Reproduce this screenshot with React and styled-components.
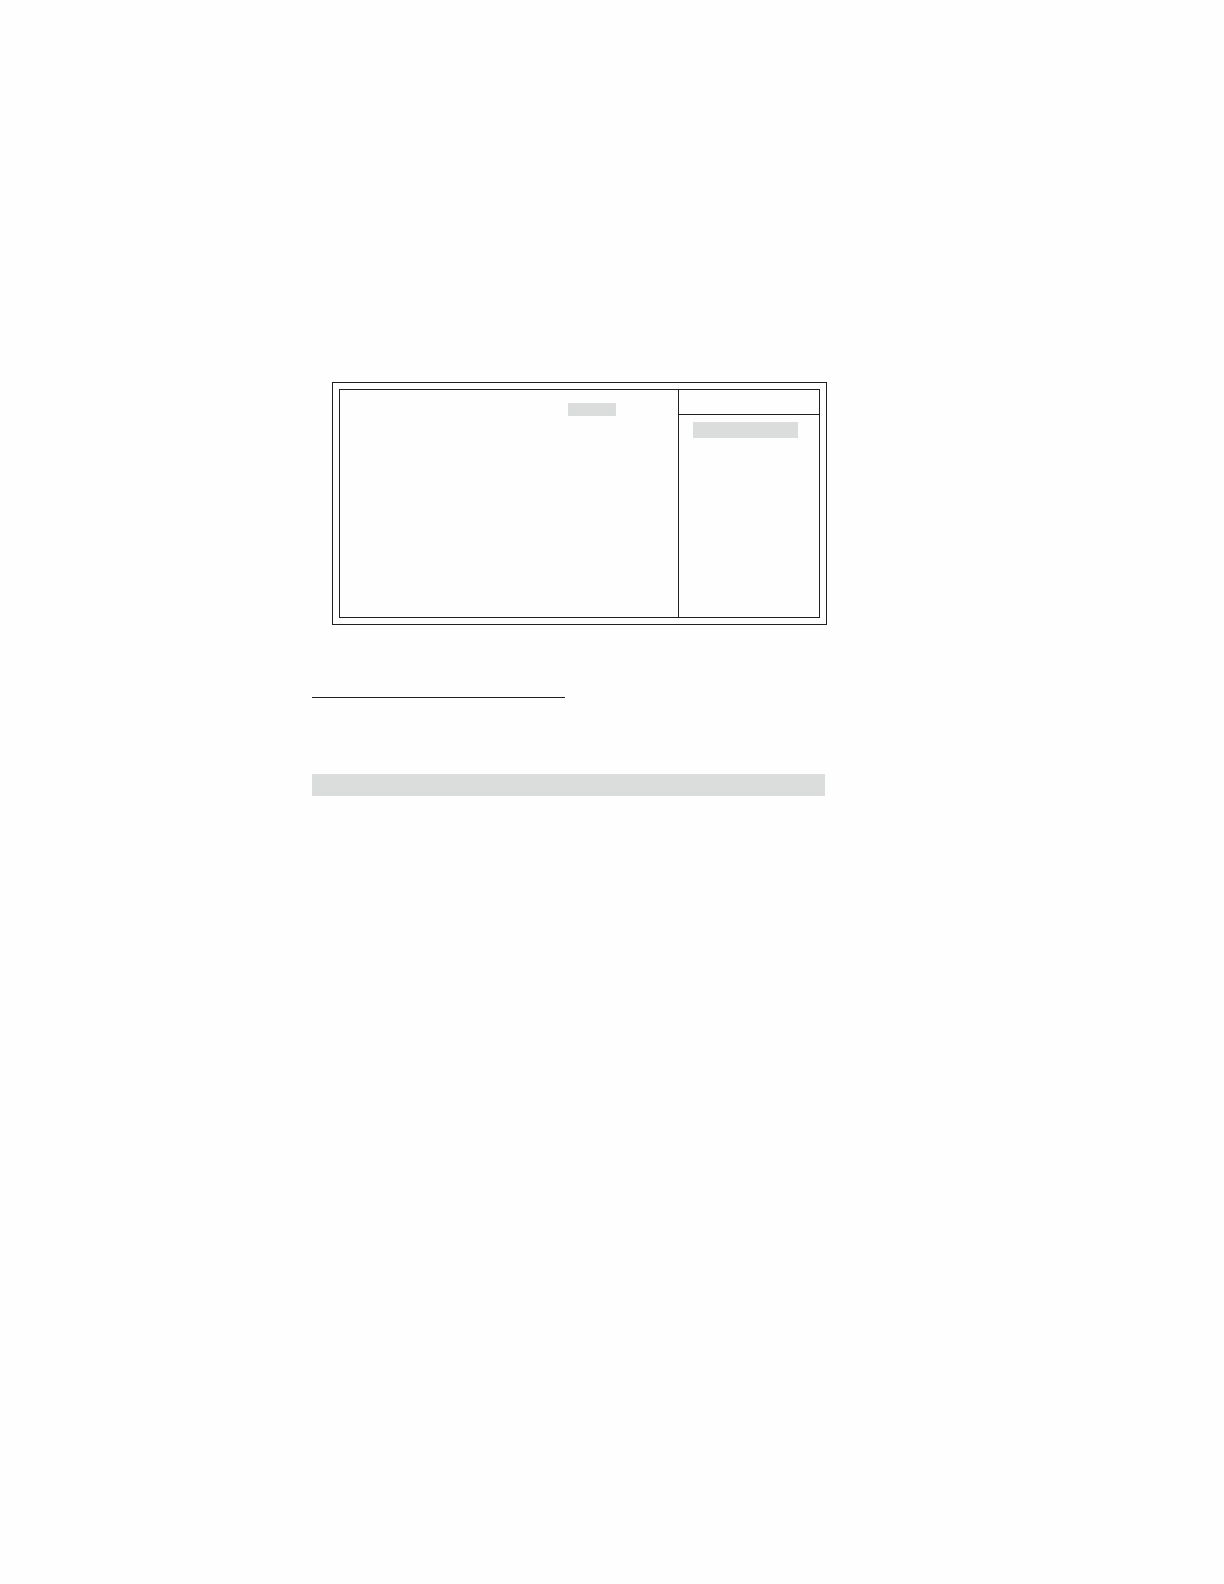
import React from 'react';
import styled, { createGlobalStyle } from 'styled-components';

const ink = '#231f20';
const shade = '#dbdcdc';

const GlobalStyle = createGlobalStyle`
  * {
    box-sizing: border-box;
  }

  body {
    margin: 0;
    background: #fefefe;
  }
`

const Page = styled.main`
  min-height: 100vh;
  padding: 382px 399px 0 312px;
`

const Frame = styled.section`
  margin: 0 -2px 72px 20px;
  padding: 6px;
  border: 1px solid ${ink};
`

const Screen = styled.div`
  display: flex;
  min-height: 229px;
  border: 1px solid ${ink};
`

const Settings = styled.div`
  display: flex;
  flex: 1;
  justify-content: flex-end;
  align-items: flex-start;
  padding: 13px 62px 0 0;
`

const Help = styled.aside`
  width: 141px;
  border-left: 1px solid ${ink};
`

const HelpTitle = styled.div`
  height: 25px;
  border-bottom: 1px solid ${ink};
`

const HelpBody = styled.div`
  padding: 7px 21px 0 14px;
`

const Highlight = styled.div`
  width: ${props => props.$width || '100%'};
  height: ${props => props.$height};
  background: ${shade};
`

const Rule = styled.hr`
  width: 253px;
  height: 1px;
  margin: 0 0 76px;
  border: 0;
  background: ${ink};
`

const App = () => {
  return (
    <React.Fragment>
      <GlobalStyle />
      <Page>
        <Frame>
          <Screen>
            <Settings>
              <Highlight $width="48px" $height="13px" />
            </Settings>
            <Help>
              <HelpTitle />
              <HelpBody>
                <Highlight $height="16px" />
              </HelpBody>
            </Help>
          </Screen>
        </Frame>
        <Rule />
        <Highlight $height="22px" />
      </Page>
    </React.Fragment>
  );
};

export default App;
